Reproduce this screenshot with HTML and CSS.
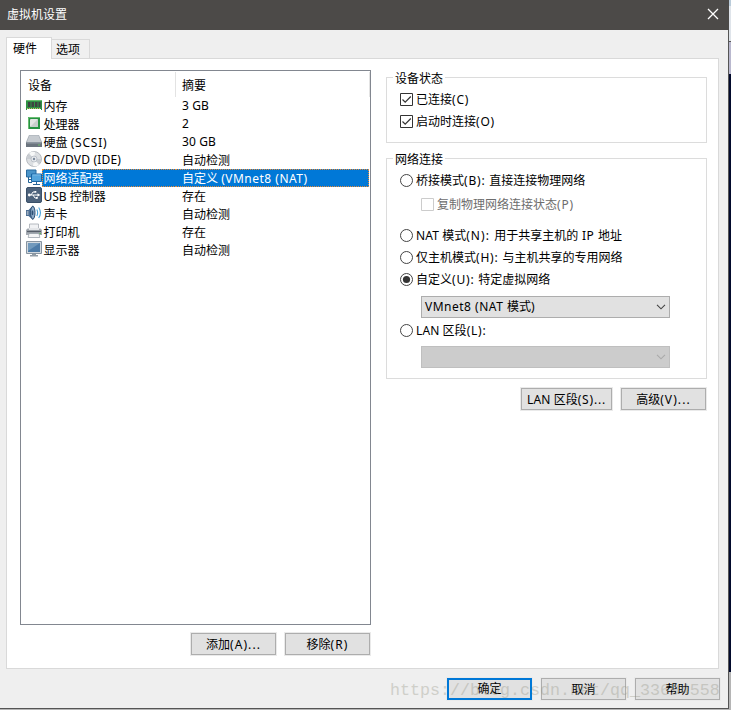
FILE: index.html
```html
<!DOCTYPE html>
<html lang="zh-CN">
<head>
<meta charset="utf-8">
<title>虚拟机设置</title>
<link rel="stylesheet" href="styles.css">
</head>
<body>
<div class="desktop">
<div class="window">
  <header class="titlebar">
    <span class="title">虚拟机设置</span>
    <svg class="close" width="12" height="12" viewBox="0 0 12 12"><path d="M1 1L11 11M11 1L1 11" stroke="#fff" stroke-width="1.3" fill="none"/></svg>
  </header>
  <nav class="tabs"><span class="tab active">硬件</span><span class="tab">选项</span></nav>
  <main class="page">
    <section class="left">
      <div class="list">
        <div class="head"><span class="c1">设备</span><span class="c2">摘要</span></div>
        <div class="row">
          <svg class="ico" viewBox="0 0 16 16"><path d="M0 3H16V13H15V12H1V13H0Z" fill="#2f9144"/><path d="M0 3.5H16" stroke="#65bd6e"/><path d="M2 5H4.5V10H2ZM5.5 5H8V10H5.5ZM9 5H11.500V10H9ZM12.500 5H14.500V10H12.500Z" fill="#3c4340"/><path d="M1 11.500H15" stroke="#c4bd62" stroke-dasharray="1 1"/></svg>
          <span class="name">内存</span><span class="sum lat">3 GB</span></div>
        <div class="row">
          <svg class="ico" viewBox="0 0 16 16"><rect x="2" y="2" width="12" height="12" fill="#269342"/><path d="M2.500 14V2.500H14" stroke="#69bd72" fill="none"/><rect x="4" y="4" width="8" height="8" rx="1" fill="#e2e5e2"/><path d="M4 12L12 4V12Z" fill="#c8cecb"/></svg>
          <span class="name">处理器</span><span class="sum lat">2</span></div>
        <div class="row">
          <svg class="ico" viewBox="0 0 16 16"><path d="M3 2H13L16 9V14H0V9Z" fill="#a6adb5"/><path d="M3.500 2.500H12.500L15 9H1Z" fill="#c6cbd0"/><path d="M0 9.500H16V14H0Z" fill="#6b747e"/><path d="M1 10H15" stroke="#939ca6"/><path d="M12 12H14" stroke="#70c46b"/></svg>
          <span class="name">硬盘 <i class="par">(SCSI)</i></span><span class="sum lat">30 GB</span></div>
        <div class="row">
          <svg class="ico" viewBox="0 0 16 16"><circle cx="8" cy="8" r="7.500" fill="#dcdfe2" stroke="#a9afb5" stroke-width=".8"/><path d="M8 8L3 2Q6 0 9 1ZM8 8L13 14Q10 16 7 15Z" fill="#f7f8f8"/><path d="M8 8L1 8Q1 4 3 3ZM8 8L15 8Q15 11 13 13Z" fill="#c9cdd2"/><circle cx="8" cy="8" r="3" fill="#e8eaed" stroke="#aab2bc" stroke-width=".7"/><circle cx="8" cy="8" r="1.200" fill="#7b899a"/></svg>
          <span class="name cd">CD/DVD (IDE)</span><span class="sum">自动检测</span></div>
        <div class="row selected">
          <svg class="ico" viewBox="0 0 16 16"><path d="M.5 1H10V8H.5Z" fill="#4a94c9" stroke="#286a9f"/><path d="M2.500 8V13.500H6M2 10.500H5" fill="none" stroke="#236497"/><path d="M5.500 5H15.500V12.500H5.500Z" fill="#55a5dc" stroke="#1a66a6"/><path d="M6.500 6H14.500" stroke="#7ebbe5"/><path d="M10.500 13V15M7 15.500H14" stroke="#2a6699"/></svg>
          <span class="name">网络适配器</span><span class="sum">自定义 <i class="mid">(VMnet8 (NAT)</i></span></div>
        <div class="row">
          <svg class="ico" viewBox="0 0 16 16"><rect x=".5" y=".5" width="15" height="15" rx="1.500" fill="#4d627b" stroke="#3a5069"/><path d="M3 8H12M5 8L7 5H9M7 8L9 11H11" fill="none" stroke="#fff"/><circle cx="3.300" cy="8" r="1.400" fill="#fff"/><path d="M11.500 6.200L14.300 8L11.500 9.800ZM8.500 4H10.300V5.800H8.500ZM10 10H11.800V11.800H10Z" fill="#fff"/></svg>
          <span class="name"><i>USB</i> 控制器</span><span class="sum">存在</span></div>
        <div class="row">
          <svg class="ico" viewBox="0 0 16 16"><path d="M0 5H2.500L7 .5Q10.500 7 7 15L2.500 11H0Z" fill="#4b6d93"/><path d="M.8 6H2.500V10H.8Z" fill="#9aabbd"/><ellipse cx="6.800" cy="7.700" rx="2.200" ry="6.400" fill="#8eabc8" stroke="#2c4f74"/><ellipse cx="6.500" cy="7.700" rx=".9" ry="2.500" fill="#2c4f74"/><path d="M10.800 4.500Q12.500 7.700 10.800 11M12.700 2.500Q16.200 7.700 12.700 13" fill="none" stroke="#4aa3da" stroke-width="1.100"/></svg>
          <span class="name">声卡</span><span class="sum">自动检测</span></div>
        <div class="row">
          <svg class="ico" viewBox="0 0 16 16"><path d="M3.500 1H12.500V7H3.500Z" fill="#f1f2f4" stroke="#a4a9b1" stroke-width=".8"/><path d="M1.500 5.500H14.500L16 7V12H0V7Z" fill="#a3a9b1"/><path d="M3 5H13V7H3Z" fill="#e3e5e8"/><path d="M1 8.500H15" stroke="#555d68" stroke-width="1.300"/><path d="M3 10.500H13L13.800 14.500H2.200Z" fill="#f4f5f6" stroke="#8f98a2" stroke-width=".7"/><path d="M13.500 10.500H15" stroke="#53bd50"/></svg>
          <span class="name">打印机</span><span class="sum">存在</span></div>
        <div class="row">
          <svg class="ico" viewBox="0 0 16 16"><path d="M.5.5H15.500V12.500H.5Z" fill="#d2d9df" stroke="#8794a1"/><path d="M2 2H14V11H2Z" fill="#4d7ba7"/><path d="M2 2H14L2 10Z" fill="#7199bc"/><path d="M6 13H10V14H12V15.500H4V14H6Z" fill="#919ca6"/></svg>
          <span class="name">显示器</span><span class="sum">自动检测</span></div>
      </div>
      <div class="actions"><button>添加<i class="wider">(A)...</i></button><button>移除<i class="wider">(R)</i></button></div>
    </section>
    <section class="right">
      <fieldset class="status"><legend>设备状态</legend>
        <label class="opt"><svg class="mark" viewBox="0 0 13 13"><path d="M.5.5H12.500V12.500H.5Z" fill="#fff" stroke="#333"/><path d="M2.500 6.500L5.200 9.200L10.800 3.500" fill="none" stroke="#333" stroke-width="1.200"/></svg>已连接<i class="par">(C)</i></label>
        <label class="opt"><svg class="mark" viewBox="0 0 13 13"><path d="M.5.5H12.500V12.500H.5Z" fill="#fff" stroke="#333"/><path d="M2.500 6.500L5.200 9.200L10.800 3.500" fill="none" stroke="#333" stroke-width="1.200"/></svg>启动时连接<i class="par">(O)</i></label>
      </fieldset>
      <fieldset class="network"><legend>网络连接</legend>
        <label class="opt"><svg class="mark" viewBox="0 0 13 13"><circle cx="6.500" cy="6.500" r="6" fill="#fff" stroke="#444"/></svg>桥接模式<i class="par">(B): </i>直接连接物理网络</label>
        <label class="opt sub"><svg class="mark" viewBox="0 0 13 13"><path d="M.5.5H12.500V12.500H.5Z" fill="#fff" stroke="#ccc"/></svg>复制物理网络连接状态<i class="par">(P)</i></label>
        <label class="opt nat"><svg class="mark" viewBox="0 0 13 13"><circle cx="6.500" cy="6.500" r="6" fill="#fff" stroke="#444"/></svg><i class="lat">NAT </i>模式<i class="wider">(N): </i>用于共享主机的<i class="mid"> IP </i>地址</label>
        <label class="opt"><svg class="mark" viewBox="0 0 13 13"><circle cx="6.500" cy="6.500" r="6" fill="#fff" stroke="#444"/></svg>仅主机模式<i class="par">(H): </i>与主机共享的专用网络</label>
        <label class="opt"><svg class="mark" viewBox="0 0 13 13"><circle cx="6.500" cy="6.500" r="6" fill="#fff" stroke="#444"/><circle cx="6.500" cy="6.500" r="3.600" fill="#333"/></svg>自定义<i class="par">(U): </i>特定虚拟网络</label>
        <div class="combo"><span><i class="mid">VMnet8 (NAT </i>模式<i class="lat">)</i></span><svg width="10" height="6" viewBox="0 0 10 6"><path d="M1 .8L5 4.800L9 .8" fill="none" stroke="#444" stroke-width="1.100"/></svg></div>
        <label class="opt lan"><svg class="mark" viewBox="0 0 13 13"><circle cx="6.500" cy="6.500" r="6" fill="#fff" stroke="#444"/></svg><i class="lat">LAN </i>区段<i class="par">(L):</i></label>
        <div class="combo off"><span></span><svg width="10" height="6" viewBox="0 0 10 6"><path d="M1 .8L5 4.800L9 .8" fill="none" stroke="#aaa" stroke-width="1.100"/></svg></div>
      </fieldset>
      <div class="actions net"><button class="wide"><i class="lat">LAN </i>区段<i class="par">(S)...</i></button><button>高级<i class="wider">(V)...</i></button></div>
    </section>
  </main>
  <footer class="actions foot"><button class="default">确定</button><button>取消</button><button>帮助</button></footer>
</div>
<div class="watermark">https://blog.csdn.net/qq_33694558</div>
</div>
</body>
</html>
```
FILE: styles.css
```css
* { box-sizing: border-box; }
body { margin: 0; overflow: hidden; }
.desktop {
  position: relative; width: 731px; height: 710px;
  background: linear-gradient(#b9cbd9 0 6px, #dfe4ea 6px 41px, #555 41px 42px, #b9b8ce 42px 74px, #020a2c 74px 672px, #b5b5b5 672px);
  font: 12px/18px "Noto Sans", "Noto Sans CJK SC", sans-serif; color: #000;
}
i { font-style: normal; white-space: pre; }
.lat { letter-spacing: .1px; }
.cd { letter-spacing: .2px; }
.mid { letter-spacing: .5px; }
.par { letter-spacing: .8px; }
.wider { letter-spacing: 1.100px; }
.window { width: 729px; height: 709px; background: #efefef; border-right: 1px solid #555; border-bottom: 1px solid #555; display: flex; flex-direction: column; }
.titlebar { height: 30px; width: 729px; flex: none; background: #4c4a48; color: #fff; display: flex; justify-content: space-between; align-items: center; padding: 0 10px 0 7px; }
.close { display: block; margin-top: -2px; }
.tabs { display: flex; align-items: flex-end; height: 29px; padding: 7px 0 0 6px; flex: none; z-index: 1; }
.tab { height: 19px; width: 38px; border: 1px solid #d9d9d9; border-left: 0; border-bottom: 0; background: #f0f0f0; padding: 1px 4px; margin-bottom: 1px; white-space: nowrap; }
.tab.active { height: 22px; width: 46px; background: #fff; border-left: 1px solid #d9d9d9; padding: 2px 6px 0; margin-bottom: 0; }
.page { margin: -1px 0 0 6px; width: 713px; height: 611px; flex: none; border: 1px solid #d9d9d9; background: #fff; display: flex; padding: 11px 0 0 13px; gap: 15px; }
.left { width: 351px; }
.list { height: 555px; border: 1px solid #828790; }
.head { height: 26px; display: flex; line-height: 28px; padding-top: 1px; }
.c1 { width: 155px; height: 25px; padding-left: 7px; border-right: 1px solid #e3e3e3; }
.c2 { width: 194px; height: 25px; padding-left: 6px; border-right: 1px solid #e3e3e3; }
.row { height: 18px; display: flex; padding-left: 5px; white-space: nowrap; line-height: 19px; }
.ico { width: 16px; height: 16px; flex: none; }
.name { width: 134px; height: 18px; padding-left: 1.500px; }
.sum { flex: 1; height: 18px; padding-left: 6px; }
.sum.lat, .name.cd { line-height: 17px; }
.selected .name, .selected .sum { background: #0078d7; color: #fff; border: dotted #e58a38; border-width: 1px 0; line-height: 17px; }
.selected .name { border-left-width: 1px; padding-left: .5px; }
.selected .sum { border-right-width: 1px; margin-right: 1px; }
.actions { display: flex; justify-content: flex-end; gap: 9px; }
button { width: 85px; height: 22px; margin: 0; padding: 1px 0 0; border: 1px solid #adadad; background: #e1e1e1; font: inherit; line-height: 18px; color: #000; outline: 1px solid #eaeaea; white-space: nowrap; }
.left .actions { padding: 8px 1px 0 0; }
.right { width: 321px; }
fieldset { position: relative; margin: 0; padding: 0 0 0 13px; border: 1px solid #dcdcdc; }
legend { position: absolute; left: 6px; top: -8px; padding: 0 2px; background: #fff; line-height: 18px; }
.status { margin-top: 7px; height: 66px; padding-top: 11px; }
.network { margin-top: 15px; height: 221px; padding-top: 11px; }
.opt { display: flex; align-items: center; height: 22px; white-space: nowrap; }
.mark { width: 13px; height: 13px; margin: 0 3px 2px 0; flex: none; }
.sub { margin: 2px 0 0 21px; color: #6d6d6d; }
.nat { margin-top: 9px; }
.combo { margin: 5px 0 0 21px; width: 249px; height: 22px; border: 1px solid #adadad; background: #e1e1e1; display: flex; align-items: center; justify-content: space-between; padding: 0 3px; }
.combo.off { background: #ccc; border-color: #bfbfbf; }
.lan { margin-top: 2px; height: 22px; }
.lan + .combo { margin-top: 4px; }
.net { padding: 9px 1px 0 0; }
.wide { width: 91px; }
.foot { padding: 9px 8px 0 0; gap: 9px; }
button.default { border: 2px solid #0078d7; padding-top: 0; }
.watermark { position: absolute; left: 390px; top: 680px; font: 16.660px/22px "Liberation Mono", monospace; color: #8d8d7c; opacity: .32; white-space: nowrap; pointer-events: none; }
```
